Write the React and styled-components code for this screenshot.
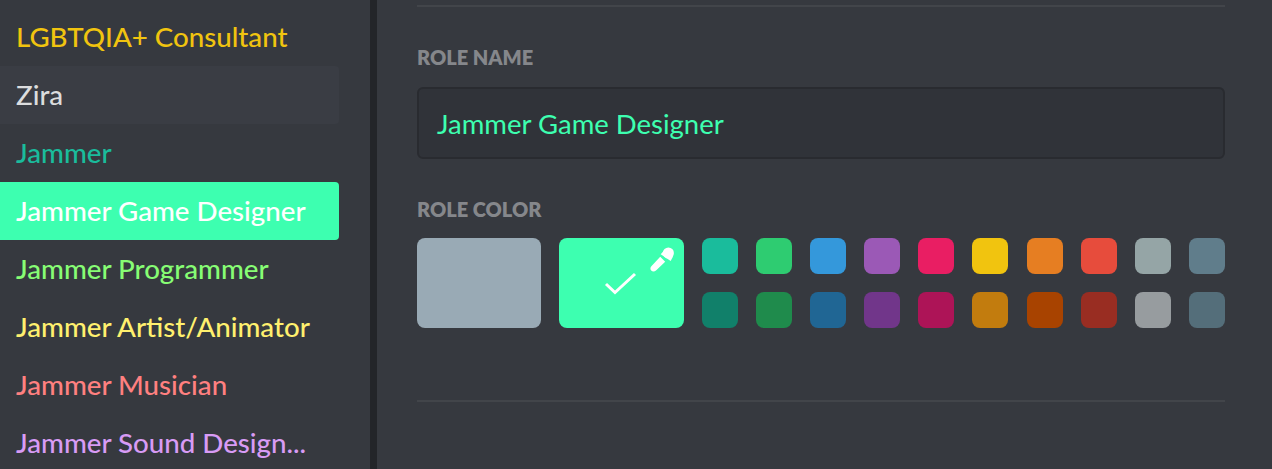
import React from 'react'
import styled, { createGlobalStyle } from 'styled-components'

const roles = [
    { name: 'LGBTQIA+ Consultant', color: '#f1c40f' },
    { name: 'Zira', color: '#dcddde', hovered: true },
    { name: 'Jammer', color: '#1abc9c' },
    { name: 'Jammer Game Designer', color: '#ffffff', selected: true },
    { name: 'Jammer Programmer', color: '#87fd74' },
    { name: 'Jammer Artist/Animator', color: '#fff06e' },
    { name: 'Jammer Musician', color: '#ff8080' },
    { name: 'Jammer Sound Design...', color: '#d89bf5' },
]

const swatches = [
    '#1abc9c', '#2ecc71', '#3498db', '#9b59b6', '#e91e63', '#f1c40f', '#e67e22', '#e74c3c', '#95a5a6', '#607d8b',
    '#11806a', '#1f8b4c', '#206694', '#71368a', '#ad1457', '#c27c0e', '#a84300', '#992d22', '#979c9f', '#546e7a',
]

const App = () => {
    return (
        <Page>
            <GlobalStyle />
            <Sidebar>
                {roles.map(role => (
                    <RoleItem key={role.name} color={role.color} $hovered={role.hovered} $selected={role.selected}>
                        {role.name}
                    </RoleItem>
                ))}
            </Sidebar>
            <Main>
                <Divider />
                <NameLabel>Role Name</NameLabel>
                <NameInput>Jammer Game Designer</NameInput>
                <ColorLabel>Role Color</ColorLabel>
                <ColorRow>
                    <BigSwatch color="#99aab5" width="124px" />
                    <BigSwatch color="#3dffb0" width="125px">
                        <CheckIcon width="36" height="28" viewBox="0 0 36 28">
                            <path d="M3 15 L12 23.5 L32 5" fill="none" stroke="#fff" strokeWidth="3" />
                        </CheckIcon>
                        <DropperIcon width="26" height="26" viewBox="0 0 26 26">
                            <circle cx="18.4" cy="6" r="5.5" fill="#fff" />
                            <path d="M10.7 7.3 L14.5 3 L23 9.5 L20.7 14 Z" fill="#fff" />
                            <path d="M10.2 9.8 L15.2 14.8 L6 23.5 C4.5 24.8 2.5 24.8 1.2 23.6 C0 22.2 .2 20.4 1.6 19 Z" fill="#fff" />
                        </DropperIcon>
                    </BigSwatch>
                    <SwatchGrid>
                        {swatches.map((swatch, index) => <Swatch key={index} color={swatch} />)}
                    </SwatchGrid>
                </ColorRow>
                <BottomDivider />
            </Main>
        </Page>
    )
}

const GlobalStyle = createGlobalStyle`
    html, body {
        margin: 0;
        padding: 0;
        background: #36393f;
        overflow: hidden;
    }
`

const Page = styled.div`
    display: flex;
    height: 469px;
    overflow: hidden;
    background: #36393f;
    font-family: Lato, "Noto Sans", sans-serif;
`

const Sidebar = styled.div`
    box-sizing: content-box;
    width: 339px;
    padding: 8px 31px 0 0;
    border-right: 7px solid #232529;
    flex-shrink: 0;
`

const RoleItem = styled.div`
    box-sizing: border-box;
    height: 58px;
    display: flex;
    align-items: center;
    padding: 0 16px 2px 16px;
    border-radius: 0 4px 4px 0;
    white-space: nowrap;
    font-size: 27.7px;
    font-weight: 500;
    color: ${props => props.color};
    background: ${props => props.$selected ? '#3dffb0' : props.$hovered ? '#3a3d44' : 'transparent'};
`

const Main = styled.div`
    width: 808px;
    margin-left: 40px;
    padding-top: 5px;
`

const Divider = styled.div`
    height: 2px;
    background: #42454a;
`

const Label = styled.div`
    font-size: 20px;
    line-height: 24px;
    font-weight: 800;
    text-transform: uppercase;
    color: #85878b;
`

const NameLabel = styled(Label)`
    margin-top: 38px;
`

const ColorLabel = styled(Label)`
    margin-top: 38px;
`

const NameInput = styled.div`
    box-sizing: border-box;
    height: 72px;
    margin-top: 18px;
    padding: 0 18px;
    display: flex;
    align-items: center;
    border: 2px solid #292b30;
    border-radius: 6px;
    background: #303339;
    font-size: 27.5px;
    color: #3dffb0;
`

const ColorRow = styled.div`
    display: flex;
    gap: 18px;
    margin-top: 17px;
`

const BigSwatch = styled.div`
    position: relative;
    width: ${props => props.width};
    height: 90px;
    border-radius: 8px;
    background: ${props => props.color};
`

const CheckIcon = styled.svg`
    position: absolute;
    left: 44px;
    top: 31px;
`

const DropperIcon = styled.svg`
    position: absolute;
    right: 8px;
    top: 9px;
`

const SwatchGrid = styled.div`
    display: grid;
    grid-template-columns: repeat(10, 36px);
    grid-auto-rows: 36px;
    row-gap: 18px;
    column-gap: 18.1px;
`

const Swatch = styled.div`
    border-radius: 8px;
    background: ${props => props.color};
`

const BottomDivider = styled(Divider)`
    margin-top: 72px;
`

export default App
